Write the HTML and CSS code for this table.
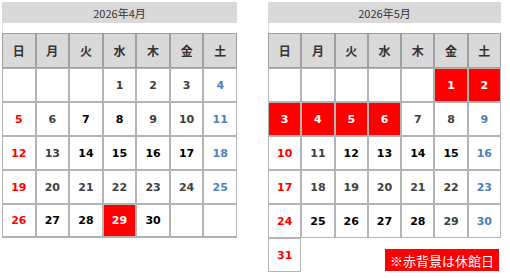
FILE: index.html
```html
<!DOCTYPE html>
<html lang="ja">
<head>
<meta charset="utf-8">
<link rel="stylesheet" href="styles.css">
</head>
<body>
<div class="page">
  <section class="cal cal-apr">
    <div class="title">2026年4月</div>
    <div class="spacer"></div>
    <div class="grid">
      <div class="hd">日</div><div class="hd">月</div><div class="hd">火</div><div class="hd">水</div><div class="hd">木</div><div class="hd">金</div><div class="hd">土</div>
      <div class="c"></div><div class="c"></div><div class="c"></div><div class="c g">1</div><div class="c g">2</div><div class="c g">3</div><div class="c sat">4</div>
      <div class="c sun">5</div><div class="c g">6</div><div class="c k">7</div><div class="c k">8</div><div class="c g">9</div><div class="c g">10</div><div class="c sat">11</div>
      <div class="c sun">12</div><div class="c g">13</div><div class="c k">14</div><div class="c k">15</div><div class="c k">16</div><div class="c k">17</div><div class="c sat">18</div>
      <div class="c sun">19</div><div class="c g">20</div><div class="c g">21</div><div class="c g">22</div><div class="c g">23</div><div class="c g">24</div><div class="c sat">25</div>
      <div class="c sun">26</div><div class="c k">27</div><div class="c k">28</div><div class="c off">29</div><div class="c k">30</div><div class="c"></div><div class="c"></div>
    </div>
  </section>
  <section class="cal cal-may">
    <div class="title">2026年5月</div>
    <div class="spacer"></div>
    <div class="grid">
      <div class="hd">日</div><div class="hd">月</div><div class="hd">火</div><div class="hd">水</div><div class="hd">木</div><div class="hd">金</div><div class="hd">土</div>
      <div class="c"></div><div class="c"></div><div class="c"></div><div class="c"></div><div class="c"></div><div class="c off">1</div><div class="c off">2</div>
      <div class="c off">3</div><div class="c off">4</div><div class="c off">5</div><div class="c off">6</div><div class="c g">7</div><div class="c g">8</div><div class="c sat">9</div>
      <div class="c sun">10</div><div class="c g">11</div><div class="c k">12</div><div class="c k">13</div><div class="c k">14</div><div class="c k">15</div><div class="c sat">16</div>
      <div class="c sun">17</div><div class="c g">18</div><div class="c g">19</div><div class="c g">20</div><div class="c g">21</div><div class="c g">22</div><div class="c sat">23</div>
      <div class="c sun">24</div><div class="c k">25</div><div class="c k">26</div><div class="c k">27</div><div class="c k">28</div><div class="c g">29</div><div class="c sat">30</div>
      <div class="c sun">31</div>
      <div class="legend">※赤背景は休館日</div>
    </div>
  </section>
</div>
</body>
</html>
```

FILE: styles.css
```css
* { box-sizing: border-box; }
html, body { margin: 0; padding: 0; background: #fff; }
body {
  font-family: "DejaVu Sans", "Noto Sans CJK JP", sans-serif;
}
.page {
  display: flex;
  align-items: flex-start;
  gap: 31px;
  padding: 2px 0 0 2px;
}
.cal-apr { width: 235px; }
.cal-may { width: 233px; }
.title {
  height: 21px;
  background: #d9d9d9;
  color: #333;
  font-family: "Noto Sans CJK JP", sans-serif;
  font-size: 11px;
  display: flex;
  align-items: center;
  justify-content: center;
}
.spacer {
  height: 10px;
  border-left: 1px solid #e2e2e2;
}
.grid {
  display: grid;
  grid-template-columns: repeat(7, 1fr);
  grid-template-rows: 35px repeat(6, 34px);
}
.hd, .c {
  border: 1px solid #b4b4b4;
  display: flex;
  align-items: center;
  justify-content: center;
}
.hd {
  background: #d9d9d9;
  border-color: #a0a0a0;
  color: #333;
  font-family: "Noto Sans CJK JP", sans-serif;
  font-weight: 700;
  font-size: 12px;
}
.c {
  font-weight: 700;
  font-size: 11px;
  background: #fff;
}
.cal-apr .grid .c:nth-last-child(-n+7) { border-bottom: 2px solid #b0b0b0; }
.g { color: #404040; }
.k { color: #000; }
.sun { color: #ff0000; }
.sat { color: #4f81bd; }
.off { background: #ff0000; color: #fff; }
.legend {
  grid-column: 4 / 8;
  justify-self: end;
  align-self: end;
  margin: 0 2px 1px 0;
  height: 22px;
  padding: 0 5px;
  background: #ff0000;
  color: #fff;
  font-family: "Noto Sans CJK JP", sans-serif;
  font-size: 13px;
  white-space: nowrap;
  display: flex;
  align-items: center;
}
```
